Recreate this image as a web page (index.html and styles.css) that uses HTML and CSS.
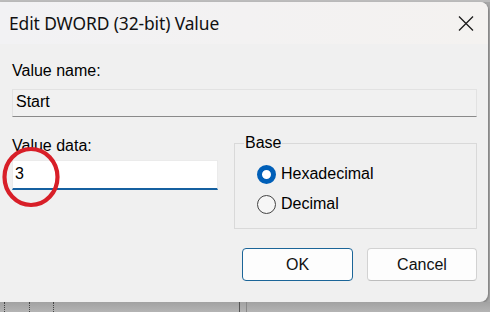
FILE: index.html
```html
<!DOCTYPE html>
<html>
<head>
<meta charset="utf-8">
<link rel="stylesheet" href="styles.css">
</head>
<body>
<div class="screen">
  <div class="topstrip"></div>
  <div class="dialog">
    <div class="titlebar">
      <span class="title">Edit DWORD (32-bit) Value</span>
      <svg class="close" width="16" height="15" viewBox="0 0 16 15"><path d="M1 0.5 L15 14.5 M15 0.5 L1 14.5" stroke="#1c1c1c" stroke-width="1.3" fill="none"/></svg>
    </div>
    <div class="content">
      <div class="lbl name-lbl">Value name:</div>
      <div class="field name-field">Start</div>
      <div class="row">
        <div class="col-left">
          <div class="lbl data-lbl">Value data:</div>
          <div class="field data-field">3</div>
        </div>
        <fieldset class="base">
          <legend class="legend">Base</legend>
          <div class="radios">
            <div class="radio-row"><span class="radio checked"></span><span class="radio-text">Hexadecimal</span></div>
            <div class="radio-row"><span class="radio"></span><span class="radio-text">Decimal</span></div>
          </div>
        </fieldset>
      </div>
      <div class="buttons">
        <div class="btn btn-ok">OK</div>
        <div class="btn btn-cancel">Cancel</div>
      </div>
    </div>
    <svg class="annot" width="66" height="66" viewBox="0 0 66 66"><ellipse cx="33" cy="33" rx="26.5" ry="28" stroke="#d81f28" stroke-width="4.2" fill="none"/></svg>
  </div>
  <div class="bottomstrip">
    <span class="dot d1"></span><span class="dot d2"></span><span class="dot d3"></span><span class="vline v1"></span><span class="vline v2"></span>
  </div>
</div>
</body>
</html>
```
FILE: styles.css
```css
html, body {
  margin: 0;
  padding: 0;
}
body {
  width: 490px;
  height: 312px;
  overflow: hidden;
  background: #a9a9a9;
}
.screen {
  width: 490px;
  height: 312px;
  display: flex;
  flex-direction: column;
  background: #a7a7a7;
}
.topstrip {
  height: 2px;
  background: #bcbcbc;
}
.dialog {
  position: relative;
  width: 488px;
  height: 300px;
  background: #f0f0f0;
  border-radius: 0 8px 8px 0;
  overflow: hidden;
  box-shadow: 1px 1px 2px rgba(0,0,0,0.25);
}
.titlebar {
  height: 42px;
  display: flex;
  align-items: center;
  justify-content: space-between;
  padding-left: 9px;
  padding-right: 14px;
  background: linear-gradient(90deg, #f2f2f4, #f4f2f0);
  box-sizing: border-box;
}
.title {
  font-family: "Noto Sans", "Open Sans", sans-serif;
  font-size: 17.4px;
  color: #111;
  letter-spacing: -0.1px;
}
.close {
  display: block;
  margin-top: 1px;
}
.content {
  padding: 0 11px 0 12px;
  font-family: "Liberation Sans", Arial, sans-serif;
  font-size: 16px;
  line-height: 18px;
  color: #000;
}
.lbl {
  height: 18px;
}
.name-lbl {
  margin-top: 18px;
}
.field {
  box-sizing: border-box;
  padding: 3px 3px 0 3px;
}
.name-field {
  margin-top: 9px;
  height: 28px;
  border: 1px solid #e2e2e2;
  border-bottom: 1px solid #8a8a8a;
  background: #f1f1f1;
}
.row {
  display: flex;
  align-items: flex-start;
  gap: 16px;
}
.col-left {
  width: 206px;
}
.data-lbl {
  margin-top: 20px;
}
.data-field {
  margin-top: 5px;
  height: 30px;
  padding-top: 4px;
  padding-left: 2px;
  background: #fff;
  border: 1px solid #ebebeb;
  border-bottom: 2px solid #1560a0;
}
.base {
  flex: 1;
  margin: 17px 0 0 0;
  padding: 0 0 14px 22px;
  border: 1px solid #d9d9d9;
  min-width: 0;
}
.legend {
  padding: 0 1px;
  margin-left: -13px;
  line-height: 18px;
}
.radios {
  margin-top: 12px;
  display: flex;
  flex-direction: column;
  gap: 10px;
}
.radio-row {
  display: flex;
  align-items: center;
  height: 20px;
  gap: 5px;
  font-size: 16px;
}
.radio {
  box-sizing: border-box;
  width: 19px;
  height: 19px;
  border-radius: 50%;
  border: 1px solid #444;
  background: #f6f6f6;
  flex: none;
}
.radio.checked {
  border: 5.5px solid #005fb8;
  background: #fff;
}
.buttons {
  margin-top: 19px;
  display: flex;
  justify-content: flex-end;
  gap: 14px;
}
.btn {
  box-sizing: border-box;
  height: 33px;
  border-radius: 4px;
  background: #fdfdfd;
  display: flex;
  align-items: center;
  justify-content: center;
  font-size: 16px;
  color: #111;
}
.btn-ok {
  width: 111px;
  border: 1px solid #1b6598;
}
.btn-cancel {
  width: 110px;
  border: 1px solid #d2d2d2;
  border-bottom-color: #bdbdbd;
}
.annot {
  position: absolute;
  left: -2px;
  top: 142px;
}
.bottomstrip {
  flex: 1;
  position: relative;
  display: flex;
  background: linear-gradient(180deg, #a2a2a2, #b4b4b4);
}
.dot {
  width: 0;
  height: 10px;
  border-left: 1px dotted #444;
}
.d1 { margin-left: 4px; }
.d2 { margin-left: 24px; }
.d3 { margin-left: 23px; }
.vline {
  width: 0;
  height: 10px;
  border-left: 1px solid #555;
}
.v1 { margin-left: 185px; }
.v2 { margin-left: 6px; border-left-color: #888; }
```
